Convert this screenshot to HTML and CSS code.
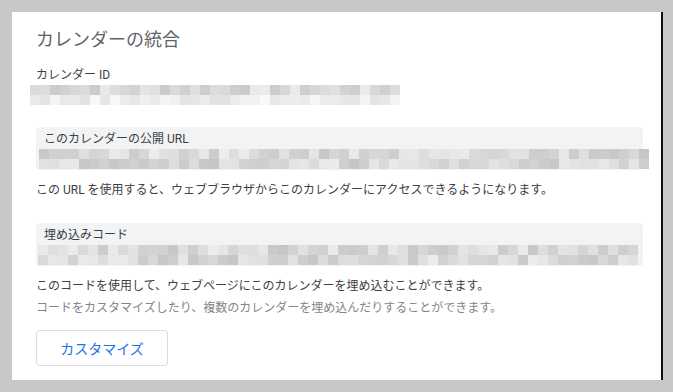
FILE: index.html
```html
<!DOCTYPE html>
<html lang="ja">
<head>
    <meta charset="UTF-8">
    <title>カレンダーの統合</title>
    <link rel="stylesheet" href="styles.css">
</head>
<body>

    <div class="panel">
        <h1 class="title">カレンダーの統合</h1>

        <!-- Calendar ID -->
        <div class="label">カレンダー ID</div>
        <div class="mosaic mosaic-id" data-cols="37" data-seed="7" data-light="1"></div>

        <!-- Public URL -->
        <div class="field">
            <div class="label">このカレンダーの公開 URL</div>
            <div class="mosaic mosaic-url" data-cols="61" data-seed="21"></div>
        </div>
        <p class="text">この URL を使用すると、ウェブブラウザからこのカレンダーにアクセスできるようになります。</p>

        <!-- Embed code -->
        <div class="field field-embed">
            <div class="label">埋め込みコード</div>
            <div class="mosaic mosaic-embed" data-cols="60" data-seed="43"></div>
        </div>
        <p class="text text-first">このコードを使用して、ウェブページにこのカレンダーを埋め込むことができます。</p>
        <p class="text text-muted">コードをカスタマイズしたり、複数のカレンダーを埋め込んだりすることができます。</p>

        <button type="button" class="btn">カスタマイズ</button>
    </div>

    <script src="script.js"></script>
</body>
</html>
```

FILE: styles.css
```css
html, body {
    margin: 0;
    height: 100%;
}

body {
    background-color: #c8c8c8;
    font-family: Roboto, "Noto Sans CJK JP", sans-serif;
    color: #3c4043;
    overflow: hidden;
}

/* White card */
.panel {
    margin: 12px 0 0 12px;
    width: 625px;
    height: 352px;
    padding: 16px 0 0 24px;
    background-color: #fff;
    border-right: 2px solid #111;
}

.title {
    margin: 0;
    font-size: 18px;
    line-height: 24px;
    font-weight: 400;
    color: #5f6368;
}

.label {
    font-size: 12px;
    line-height: 18px;
    color: #3c4043;
}

.panel > .label {
    margin-top: 14px;
}

/* Blurred value blocks */
.mosaic {
    display: grid;
    grid-auto-flow: row;
    grid-auto-rows: 10px;
}

.mosaic span {
    display: block;
    height: 10px;
}

.mosaic-id {
    margin: 1px 0 0 -6px;
    grid-template-columns: repeat(37, 10px);
}

.mosaic-url {
    margin: 1px 0 0 -5px;
    grid-template-columns: repeat(61, 10px);
}

.mosaic-embed {
    margin: 1px 0 0 -6px;
    grid-template-columns: repeat(60, 10px);
}

.field {
    width: 599px;
    margin-top: 22px;
    padding: 3px 0 1px 8px;
    background-color: #f1f3f4;
    border-radius: 4px;
}

.field-embed {
    margin-top: 24px;
}

.text {
    margin: 11px 0 0;
    font-size: 12px;
    line-height: 18px;
    color: #3c4043;
}

.text-muted {
    margin-top: 4px;
    color: #80868b;
}

.btn {
    display: block;
    margin-top: 13px;
    width: 132px;
    height: 36px;
    padding: 0;
    background-color: #fff;
    border: 1px solid #dadce0;
    border-radius: 4px;
    font-family: Roboto, "Noto Sans CJK JP", sans-serif;
    font-size: 14px;
    color: #1a73e8;
    cursor: pointer;
}
```

FILE: script.js
```js
// Fill each mosaic with pseudo-random grey cells
function rng(seed) {
    let s = seed;
    return function () {
        s = (s * 9301 + 49297) % 233280;
        return s / 233280;
    };
}

document.querySelectorAll('.mosaic').forEach(function (el) {
    const cols = parseInt(el.dataset.cols);
    const rand = rng(parseInt(el.dataset.seed));
    const light = el.dataset.light === '1';

    for (let row = 0; row < 2; row++) {
        for (let c = 0; c < cols; c++) {
            let v;
            if (light) {
                v = row === 0 ? 200 + rand() * 36 : 224 + rand() * 26;
            } else {
                v = 198 + rand() * 38;
            }
            v = Math.round(v);
            const cell = document.createElement('span');
            cell.style.background = `rgb(${v - 2}, ${v}, ${v + 2})`;
            el.appendChild(cell);
        }
    }
});
```
